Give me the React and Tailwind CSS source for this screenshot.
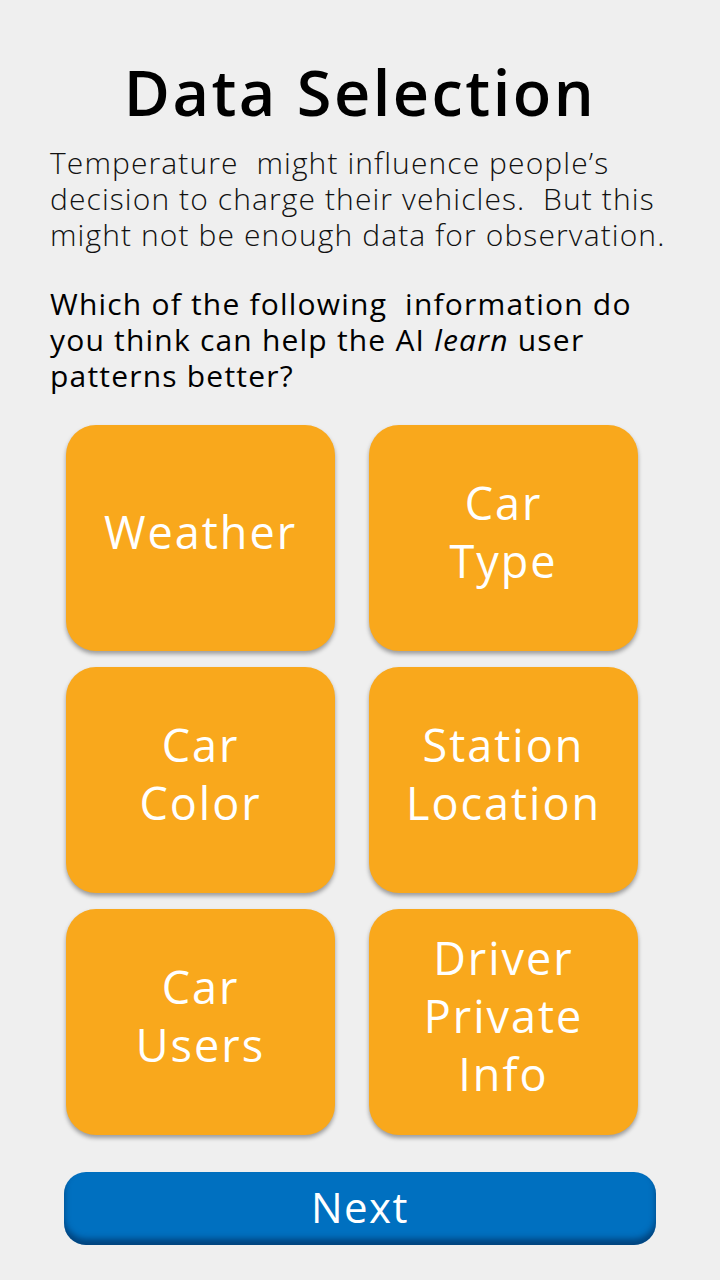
const options = [
  ["Weather"],
  ["Car", "Type"],
  ["Car", "Color"],
  ["Station", "Location"],
  ["Car", "Users"],
  ["Driver", "Private", "Info"]
];

export default function App() {
  return (
    <div className="min-h-[1280px] w-[720px] bg-[#efefef] font-['Open_Sans',sans-serif]">
      <div className="px-[50px] pt-[52px]">
        <h1 className="text-center text-[63px] font-semibold leading-[80px] tracking-[2.5px] text-black">Data Selection</h1>

        <p className="mt-[13px] whitespace-nowrap text-[30px] font-light leading-[36px] tracking-[1.1px] text-[#111]">
          Temperature&nbsp; might influence people’s
          <br />
          decision to charge their vehicles.&nbsp; But this
          <br />
          might not be enough data for observation.
        </p>

        <p className="mt-[33px] whitespace-nowrap text-[30px] font-medium leading-[36px] tracking-[1.2px] text-black">
          Which of the following&nbsp; information do
          <br />
          you think can help the AI <em>learn</em> user
          <br />
          patterns better?
        </p>
      </div>

      <div className="ml-[66px] mt-[31px] grid w-[572px] grid-cols-2 gap-x-[34px] gap-y-[16px]">
        {options.map((lines) => (
          <button
            key={lines.join(" ")}
            type="button"
            className="flex h-[226px] flex-col items-center justify-center rounded-[30px] bg-[#f9a81c] pb-[13px] text-[45px] font-medium leading-[58px] tracking-[2px] text-white shadow-[0_3px_4px_rgba(0,0,0,0.35)]"
          >
            {lines.map((line) => (
              <span key={line}>{line}</span>
            ))}
          </button>
        ))}
      </div>

      <div className="px-[64px] pt-[37px]">
        <button
          type="button"
          className="flex h-[73px] w-full items-center justify-center rounded-[22px] bg-[#0070c0] pb-[4px] text-[42px] font-medium tracking-[1.5px] text-white shadow-[inset_0_-6px_6px_rgba(0,30,70,0.55)]"
        >
          Next
        </button>
      </div>
    </div>
  );
}
